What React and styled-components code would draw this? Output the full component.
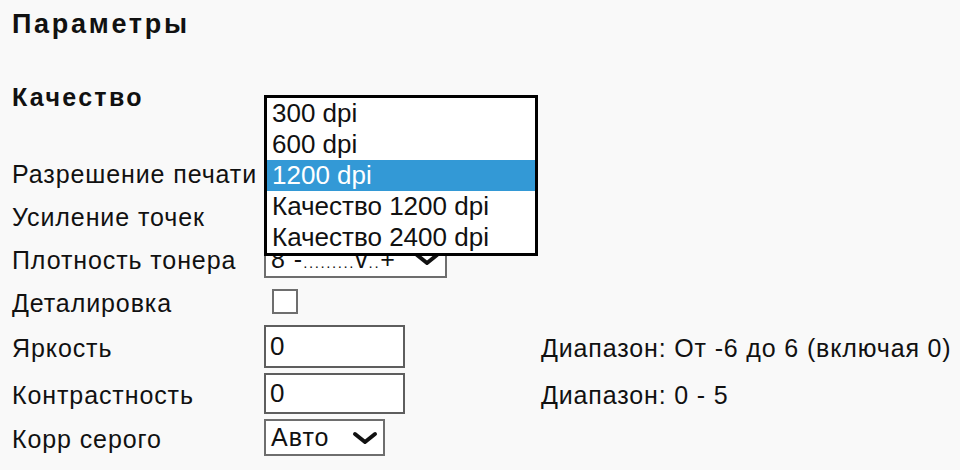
import React from 'react';
import styled, { createGlobalStyle } from 'styled-components';

const GlobalStyle = createGlobalStyle`
  body {
    margin: 0;
    background: #f9f9f9;
    font-family: "Liberation Sans", Arial, sans-serif;
    color: #111;
  }
`;

const Page = styled.div`
  position: relative;
  width: 960px;
  height: 470px;
  padding-left: 12px;
  box-sizing: border-box;
  overflow: hidden;
`;

const Title = styled.h1`
  margin: 0;
  padding-top: 9px;
  font-size: 27px;
  letter-spacing: 2.7px;
  font-weight: bold;
  line-height: 30px;
`;

const Section = styled.h2`
  margin: 44px 0 0;
  font-size: 25px;
  letter-spacing: 2.3px;
  font-weight: bold;
  line-height: 28px;
`;

const Form = styled.div`
  display: grid;
  grid-template-columns: 252px 277px auto;
  row-gap: 5px;
  margin-top: 43px;
`;

const Label = styled.div`
  display: flex;
  align-items: center;
  padding-top: 3px;
  font-size: 25px;
  letter-spacing: 0.9px;
  white-space: nowrap;
`;

const Cell = styled.div`
  display: flex;
  align-items: center;
  min-height: ${(p) => p.$h || 38}px;
`;

const Hint = styled(Label)`
  letter-spacing: 0.85px;
`;

const SelectBox = styled.div`
  display: flex;
  align-items: center;
  width: ${(p) => p.$w}px;
  height: ${(p) => p.$h || 38}px;
  box-sizing: border-box;
  border: 2px solid #6e6e6e;
  background: #fff;
  padding: 0 0 0 5px;
  font-size: 25px;
  letter-spacing: 1px;
`;

const SelectText = styled.span`
  flex: 1;
  white-space: nowrap;
`;

const Chevron = styled.svg`
  width: 26px;
  height: 14px;
  margin-right: 5px;
`;

const Checkbox = styled.div`
  width: 26px;
  height: 25px;
  margin-left: 8px;
  box-sizing: border-box;
  border: 2px solid #6e6e6e;
  background: #fff;
`;

const TextInput = styled.input`
  width: 141px;
  height: ${(p) => p.$h || 43}px;
  box-sizing: border-box;
  border: 2px solid #5e5e5e;
  background: #fff;
  padding: 0 4px;
  margin: 0;
  font-family: "Liberation Sans", Arial, sans-serif;
  font-size: 26px;
  color: #111;
  outline: none;
`;

const Dots = styled.span`
  font-size: 15px;
  letter-spacing: 1.6px;
`;

const Popup = styled.ul`
  position: absolute;
  left: 264px;
  top: 95px;
  width: 274px;
  margin: 0;
  padding: 0;
  list-style: none;
  box-sizing: border-box;
  border: 3px solid #000;
  background: #fff;
`;

const Option = styled.li`
  height: 31px;
  line-height: 31px;
  padding-left: 5px;
  font-size: 26px;
  color: ${(p) => (p.$active ? '#fff' : '#111')};
  background: ${(p) => (p.$active ? '#3399d6' : 'transparent')};
  white-space: nowrap;
`;

const ChevronIcon = () => (
  <Chevron viewBox="0 0 26 14">
    <polyline
      points="3,3 13,11 23,3"
      fill="none"
      stroke="#111"
      strokeWidth="4"
      strokeLinecap="round"
      strokeLinejoin="round"
    />
  </Chevron>
);

const Select = ({ width, height, children }) => (
  <SelectBox $w={width} $h={height}>
    <SelectText>{children}</SelectText>
    <ChevronIcon />
  </SelectBox>
);

const options = ['300 dpi', '600 dpi', '1200 dpi', 'Качество 1200 dpi', 'Качество 2400 dpi'];

export default function App() {
  return (
    <Page>
      <GlobalStyle />
      <Title>Параметры</Title>
      <Section>Качество</Section>
      <Form>
        <Label>Разрешение печати</Label>
        <Cell>
          <Select width={274}>1200 dpi</Select>
        </Cell>
        <div />

        <Label>Усиление точек</Label>
        <Cell>
          <Select width={183}>Вкл</Select>
        </Cell>
        <div />

        <Label>Плотность тонера</Label>
        <Cell>
          <Select width={183}>
            8 -<Dots>.........</Dots>v<Dots>..</Dots>+
          </Select>
        </Cell>
        <div />

        <Label>Деталировка</Label>
        <Cell $h={37}>
          <Checkbox />
        </Cell>
        <div />

        <Label>Яркость</Label>
        <Cell $h={43}>
          <TextInput defaultValue="0" />
        </Cell>
        <Hint>Диапазон: От -6 до 6 (включая 0)</Hint>

        <Label>Контрастность</Label>
        <Cell $h={41}>
          <TextInput $h={41} defaultValue="0" />
        </Cell>
        <Hint>Диапазон: 0 - 5</Hint>

        <Label>Корр серого</Label>
        <Cell $h={37}>
          <Select width={121} height={37}>Авто</Select>
        </Cell>
        <div />
      </Form>
      <Popup>
        {options.map((o) => (
          <Option key={o} $active={o === '1200 dpi'}>
            {o}
          </Option>
        ))}
      </Popup>
    </Page>
  );
}
